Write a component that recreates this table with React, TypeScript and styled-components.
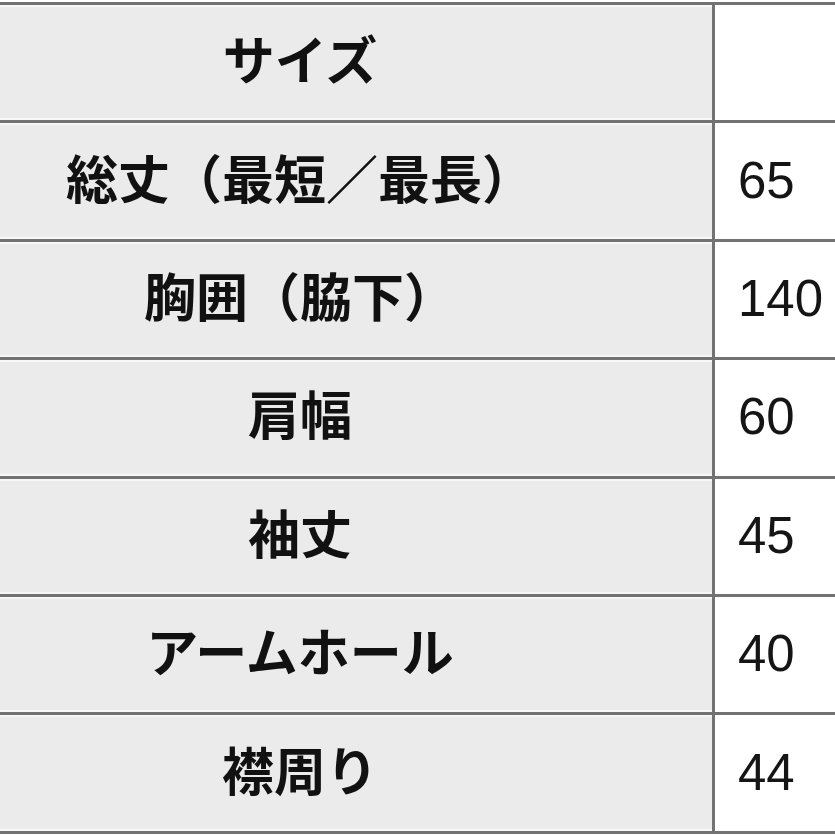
import styled, { createGlobalStyle } from "styled-components";

const GlobalStyle = createGlobalStyle`
    html, body {
        margin: 0;
        padding: 0;
        background: #ffffff;
        overflow: hidden;
    }
`

const Wrapper = styled.div`
    width: 835px;
    height: 835px;
    padding-top: 2px;
    box-sizing: border-box;
    overflow: hidden;
`

const SizeTable = styled.table`
    border-collapse: collapse;
    width: 900px;
    table-layout: fixed;
    border-top: 3px solid #727272;
`

const Row = styled.tr`
    height: 118.4px;
    border-bottom: 3px solid #727272;
`

const LabelCell = styled.th`
    width: 600px;
    padding: 0 112px 10px 0;
    background: #ebebeb;
    border-right: 3px solid #727272;
    color: #111;
    font-family: "Noto Sans CJK JP", "Noto Sans", sans-serif;
    font-size: 52px;
    font-weight: 700;
    text-align: center;
    vertical-align: middle;
    box-shadow: inset 0 2px 0 #f7f7f7, inset 0 -2px 0 #f7f7f7;
`

const ValueCell = styled.td`
    padding: 0 0 2px 23px;
    background: #ffffff;
    color: #151515;
    font-family: "Liberation Sans", "Noto Sans CJK JP", sans-serif;
    font-size: 51px;
    text-align: left;
    vertical-align: middle;
`

const rows: [string, string][] = [
    ["サイズ", ""],
    ["総丈（最短／最長）", "65"],
    ["胸囲（脇下）", "140"],
    ["肩幅", "60"],
    ["袖丈", "45"],
    ["アームホール", "40"],
    ["襟周り", "44"],
]

export default function App() {
    return (
        <>
            <GlobalStyle />
            <Wrapper>
                <SizeTable>
                    <tbody>
                        {rows.map(([label, value]) => (
                            <Row key={label}>
                                <LabelCell>{label}</LabelCell>
                                <ValueCell>{value}</ValueCell>
                            </Row>
                        ))}
                    </tbody>
                </SizeTable>
            </Wrapper>
        </>
    )
}
